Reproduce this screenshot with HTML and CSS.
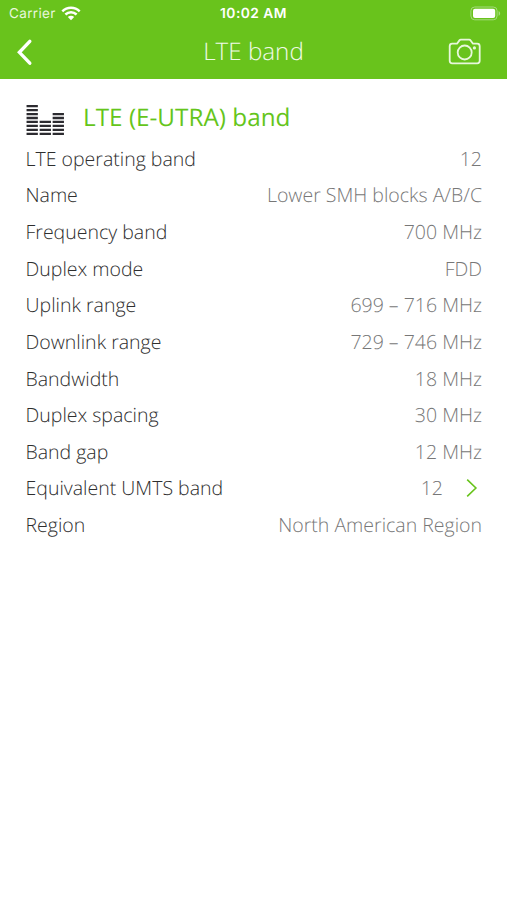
FILE: index.html
```html
<!DOCTYPE html>
<html lang="en">
<head>
<meta charset="utf-8">
<title>LTE band</title>
<link rel="stylesheet" href="styles.css">
</head>
<body>
<header class="top">
  <div class="status">
    <div class="carrier"><span>Carrier</span>
      <svg width="20" height="15" viewBox="0 0 20 15" fill="none" stroke="#fff" stroke-width="2.5"><path d="M1.3 5.3C6.2.5 13.8.5 18.7 5.3M4.4 8.5c3.2-3 8-3 11.2 0"/><path d="M6.8 11c1.9-1.6 4.5-1.6 6.4 0L10 14.2z" fill="#fff" stroke="none"/></svg>
    </div>
    <div class="clock">10:02 AM</div>
    <svg class="battery" width="31" height="15" viewBox="0 0 31 15"><rect x=".9" y="1" width="26.2" height="12.8" rx="3.8" fill="none" stroke="#a5db7e" stroke-width="1"/><rect x="3" y="2.8" width="22.2" height="9.2" rx="2" fill="#fff"/><path d="M28.6 5c2 .8 2 4 0 4.800z" fill="#a5db7e"/></svg>
  </div>
  <nav class="nav">
    <svg width="20" height="30" viewBox="0 0 20 30" fill="none" stroke="#fff" stroke-width="3.4" stroke-linecap="round" stroke-linejoin="miter"><path d="M14.8 4.300 4.400 15.300 14.800 26.200"/></svg>
    <h1>LTE band</h1>
    <svg width="34" height="28" viewBox="0 0 34 28" fill="none" stroke="#e8f7dc" stroke-width="1.8" stroke-linejoin="round"><path d="M4.200 5.700H9l2.400-3.300q.5-.7 1.400-.7h8.400q.9 0 1.400.7L25 5.700h4.200q2.500 0 2.500 2.500v14.600q0 2.500-2.500 2.500h-25q-2.500 0-2.500-2.500V8.200q0-2.500 2.500-2.500z"/><circle cx="16.700" cy="14.500" r="7"/><circle cx="26.400" cy="9.900" r="1.600" fill="#e8f7dc" stroke="none"/></svg>
  </nav>
</header>
<main>
  <div class="heading">
    <svg width="38" height="30" viewBox="0 0 38 30" fill="none" stroke="#2c2b30" stroke-width="11.300"><path d="M6.200 0v30" stroke-dasharray="2.300 1.650"/><path d="M19.300 15.800V30" stroke-dasharray="2.300 1.650"/><path d="M32.300 7.900V30" stroke-dasharray="2.300 1.650"/></svg>
    <h2>LTE (E-UTRA) band</h2>
  </div>
  <dl>
    <div class="row"><dt>LTE operating band</dt><dd>12</dd></div>
    <div class="row"><dt>Name</dt><dd>Lower SMH blocks A/B/C</dd></div>
    <div class="row"><dt>Frequency band</dt><dd>700 MHz</dd></div>
    <div class="row"><dt>Duplex mode</dt><dd>FDD</dd></div>
    <div class="row"><dt>Uplink range</dt><dd>699 – 716 MHz</dd></div>
    <div class="row"><dt>Downlink range</dt><dd>729 – 746 MHz</dd></div>
    <div class="row"><dt>Bandwidth</dt><dd>18 MHz</dd></div>
    <div class="row"><dt>Duplex spacing</dt><dd>30 MHz</dd></div>
    <div class="row"><dt>Band gap</dt><dd>12 MHz</dd></div>
    <div class="row link"><dt>Equivalent UMTS band</dt><dd>12<svg width="12" height="20" viewBox="0 0 12 20" fill="none" stroke="#68c41c" stroke-width="1.600"><path d="M1.200 1.600 9.900 10 1.200 18.400"/></svg></dd></div>
    <div class="row"><dt>Region</dt><dd>North American Region</dd></div>
  </dl>
</main>
</body>
</html>
```
FILE: styles.css
```css
* { box-sizing: border-box; }
body {
  margin: 0;
  min-height: 900px;
  background: #fff;
  font-family: "Open Sans", sans-serif;
  font-weight: 300;
  text-rendering: geometricPrecision;
}
h1, h2, dl, dt, dd { margin: 0; font-weight: 300; }
svg { display: block; flex: none; }
.top {
  height: 79px;
  background: #69c31c;
  color: #fff;
}
.status {
  display: grid;
  grid-template-columns: 1fr auto 1fr;
  align-items: center;
  height: 27px;
  padding: 0 6px 0 9px;
  font-family: Inter, sans-serif;
  font-size: 13.5px;
}
.carrier {
  display: flex;
  align-items: center;
  gap: 5px;
  font-weight: 400;
  color: #e8f7dc;
  letter-spacing: .35px;
}
.clock {
  margin-right: 3px;
  padding-top: 1px;
  font-weight: 600;
  font-size: 13.8px;
  line-height: 18px;
  letter-spacing: .45px;
}
.battery { justify-self: end; }
.nav {
  display: grid;
  grid-template-columns: 34px 1fr 34px;
  align-items: center;
  height: 50px;
  padding: 0 25px 0 15px;
}
.nav h1 {
  padding-left: 10px;
  text-align: center;
  font-size: 24.2px;
  line-height: 50px;
  color: #f0fae8;
}
main { padding: 20px 25px 0 25.5px; }
.heading {
  display: flex;
  align-items: center;
  gap: 19.5px;
  height: 41px;
}
.heading svg { margin-top: 1px; }
.heading h2 {
  margin-bottom: 4px;
  font-size: 24.3px;
  font-weight: 400;
  line-height: 36px;
  color: #65c51b;
}
.row {
  display: flex;
  justify-content: space-between;
  align-items: center;
  height: 36.63px;
  font-size: 19.5px;
  line-height: 37px;
}
.row dt { color: #2e2e2e; }
.row dd { color: #777; }
.link dd {
  display: flex;
  align-items: center;
  gap: 23px;
  padding-right: 4px;
}
```
